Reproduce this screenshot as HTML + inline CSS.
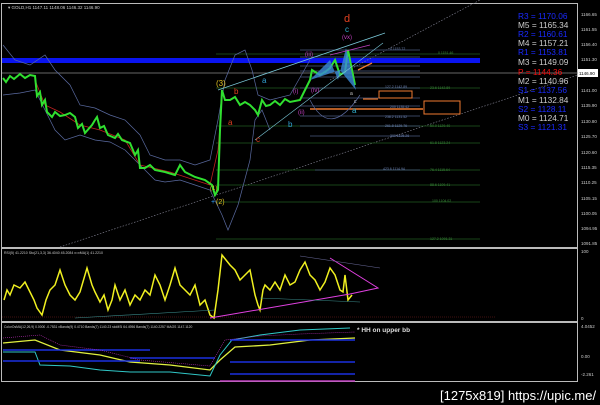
<!DOCTYPE html>
<html><head><meta charset="utf-8"><style>
html,body{margin:0;padding:0;background:#000;width:600px;height:405px;overflow:hidden}
svg{display:block}
text{font-family:"Liberation Sans",sans-serif}
</style></head><body>
<svg width="600" height="405" viewBox="0 0 600 405" xmlns="http://www.w3.org/2000/svg">
<rect width="600" height="405" fill="#000"/>
<rect x="1.5" y="3.5" width="576" height="244" fill="none" stroke="#bbb" stroke-width="1"/>
<rect x="1.5" y="248.5" width="576" height="73" fill="none" stroke="#bbb" stroke-width="1"/>
<rect x="1.5" y="322.5" width="576" height="59" fill="none" stroke="#bbb" stroke-width="1"/>
<text x="8" y="9" font-size="4.5" fill="#ccc">▾ GOLD,H1  1147.11  1148.06  1146.32  1146.90</text>
<g font-size="4.5" fill="#ccc">
<text x="581" y="16">1166.65</text><text x="581" y="31">1161.55</text><text x="581" y="46">1156.40</text>
<text x="581" y="61">1151.30</text><text x="581" y="92">1141.00</text><text x="581" y="107">1135.90</text>
<text x="581" y="123">1130.80</text><text x="581" y="138">1125.70</text><text x="581" y="154">1120.60</text>
<text x="581" y="169">1115.35</text><text x="581" y="184">1110.25</text><text x="581" y="200">1105.15</text>
<text x="581" y="215">1100.05</text><text x="581" y="230">1094.95</text><text x="581" y="245">1091.85</text>
<text x="581" y="253">100</text><text x="581" y="320">0</text><text x="581" y="328">4.0452</text>
<text x="581" y="358">0.00</text><text x="581" y="376">-2.261</text>
</g>
<rect x="2" y="58" width="478" height="5" fill="#0a14f0"/>
<line x1="2" y1="73" x2="578" y2="73" stroke="#888" stroke-width="0.8"/>
<rect x="578" y="69" width="20" height="8" fill="#fff"/><text x="579" y="75" font-size="4.5" fill="#000">1146.90</text>
<line x1="60" y1="247" x2="578" y2="75" stroke="#889" stroke-width="0.6" stroke-dasharray="1.5,1.5"/>
<line x1="330" y1="80" x2="480" y2="0" stroke="#889" stroke-width="0.6" stroke-dasharray="1.5,1.5"/>
<g stroke="#1f5a1f" stroke-width="0.7">
<line x1="216" y1="54" x2="480" y2="54"/><line x1="216" y1="88" x2="480" y2="88"/>
<line x1="216" y1="126" x2="480" y2="126"/><line x1="216" y1="143" x2="480" y2="143"/>
<line x1="216" y1="170" x2="480" y2="170"/><line x1="216" y1="185" x2="480" y2="185"/>
<line x1="216" y1="202" x2="480" y2="202"/><line x1="216" y1="239" x2="480" y2="239"/>
</g>
<g stroke="#4a5a80" stroke-width="0.7">
<line x1="300" y1="50" x2="420" y2="50"/><line x1="300" y1="57" x2="420" y2="57"/>
<line x1="300" y1="66" x2="420" y2="66"/><line x1="300" y1="71" x2="420" y2="71"/>
<line x1="300" y1="77" x2="420" y2="77"/><line x1="300" y1="88" x2="420" y2="88"/>
<line x1="300" y1="98" x2="420" y2="98"/><line x1="300" y1="106" x2="420" y2="106"/>
<line x1="300" y1="116" x2="420" y2="116"/><line x1="300" y1="126" x2="420" y2="126"/>
<line x1="310" y1="136" x2="420" y2="136"/><line x1="315" y1="170" x2="420" y2="170"/>
</g>
<g font-size="3.5" fill="#6a80b0">
<text x="390" y="50">0 1153.72</text><text x="385" y="88">127.2 1142.89</text><text x="390" y="108">200 1135.42</text>
<text x="385" y="118">238.2 1131.52</text><text x="385" y="127">261.8 1129.76</text><text x="390" y="137">300 1125.26</text><text x="383" y="170">423.6 1114.94</text>
</g>
<g font-size="3.5" fill="#3a8a3a">
<text x="438" y="54">0 1151.46</text><text x="430" y="89">23.6 1142.89</text><text x="430" y="127">50.0 1129.40</text>
<text x="430" y="144">61.8 1123.24</text><text x="430" y="171">76.4 1115.64</text><text x="430" y="186">88.6 1109.41</text><text x="432" y="202">100 1104.02</text><text x="430" y="240">127.2 1091.31</text>
</g>
<rect x="379" y="91" width="33" height="7" fill="none" stroke="#f07a30"/>
<rect x="424" y="101" width="36" height="13" fill="none" stroke="#f07a30"/>
<line x1="363" y1="99" x2="378" y2="99" stroke="#f07a30" stroke-width="1.2"/>
<line x1="310" y1="109" x2="423" y2="109" stroke="#f07a30" stroke-width="1.5"/>
<line x1="358" y1="70" x2="372" y2="63" stroke="#f07a30" stroke-width="1.3"/>
<g fill="none" stroke="#5a6aa0" stroke-width="0.7">
<path d="M3,45 L15,60 L30,65 L45,55 L55,70 L70,85 L80,105 L95,108 L110,115 L125,120 L140,135 L150,155 L165,160 L180,160 L195,165 L210,160 L218,120 L225,80 L235,55 L245,50 L252,70 L258,95 L270,100 L290,95 L310,60"/>
<path d="M3,95 L20,93 L35,90 L45,110 L55,130 L65,140 L80,135 L95,140 L110,142 L125,150 L140,165 L155,180 L165,182 L180,180 L195,185 L210,190 L222,215 L228,230 L238,205 L250,160 L255,120 L262,110 L270,130"/>
<path d="M310,100 Q330,140 360,95"/>
</g>
<path d="M35,80 L45,105 L60,112 L80,125 L100,130 L125,140 L140,165 L170,172 L210,185 L218,150 L222,100" fill="none" stroke="#c02020" stroke-width="0.8"/>
<path d="M3,78 L6,82 L10,76 L14,79 L20,74 L25,78 L30,75 L35,76 L37,96 L40,92 L42,105 L45,100 L47,112 L52,117 L55,112 L60,116 L65,115 L70,113 L75,117 L78,128 L82,124 L85,133 L92,125 L95,120 L97,117 L100,128 L104,126 L108,135 L115,138 L118,134 L122,140 L130,143 L135,155 L138,150 L140,168 L145,168 L150,165 L155,170 L165,172 L175,175 L180,165 L185,172 L195,177 L205,180 L212,185 L215,195 L218,190 L220,130 L222,90 L225,100 L230,100 L235,97 L240,105 L245,102 L250,105 L255,110 L258,115 L262,100 L266,106 L270,105 L275,101 L280,105 L285,99 L290,102 L300,100 L305,90 L310,80 L312,70 L320,75 L325,72 L330,68 L335,60 L340,75 L345,72 L348,50 L352,70 L355,85" fill="none" stroke="#30e030" stroke-width="2"/>
<path d="M310,80 L330,60 L338,80 L346,48 L356,90 L340,70 Z" fill="#3a8ad8" opacity="0.8"/>
<line x1="218" y1="90" x2="385" y2="33" stroke="#7ac8d8" stroke-width="0.8"/>
<line x1="255" y1="140" x2="383" y2="43" stroke="#7ac8d8" stroke-width="0.6"/>
<line x1="330" y1="55" x2="370" y2="45" stroke="#c040c0" stroke-width="0.8"/>
<g font-size="8">
<text x="216" y="86" fill="#e0c020">(3)</text><text x="210" y="190" fill="#e0c020" font-size="6">(1)</text>
<text x="216" y="204" fill="#e0c020" font-size="7">(2)</text><text x="211" y="204" fill="#30a0ff" font-size="7">+</text>
<text x="234" y="94" fill="#e04020">b</text><text x="228" y="125" fill="#e04020">a</text><text x="256" y="142" fill="#e04020">c</text>
<text x="262" y="83" fill="#30a0d0">a</text><text x="288" y="127" fill="#30a0d0">b</text>
<text x="344" y="22" fill="#e04020" font-size="11">d</text><text x="345" y="32" fill="#30b0d0">c</text>
<text x="342" y="39" fill="#c040c0" font-size="6">(vx)</text><text x="305" y="56" fill="#c040c0" font-size="6">(iii)</text>
<text x="293" y="93" fill="#c040c0" font-size="6">(i)</text><text x="311" y="92" fill="#c040c0" font-size="6">(iv)</text>
<text x="298" y="114" fill="#c040c0" font-size="6">(ii)</text><text x="352" y="113" fill="#30b0d0">a</text>
<text x="350" y="95" fill="#ccc" font-size="5">a</text><text x="354" y="103" fill="#ccc" font-size="5">c</text>
</g>
<g font-size="8.3">
<text x="518" y="19" fill="#1a2aff">R3 = 1170.06</text>
<text x="518" y="28" fill="#ccc">M5 = 1165.34</text>
<text x="518" y="37" fill="#1a2aff">R2 = 1160.61</text>
<text x="518" y="46" fill="#ccc">M4 = 1157.21</text>
<text x="518" y="55" fill="#1a2aff">R1 = 1153.81</text>
<text x="518" y="65" fill="#ccc">M3 = 1149.09</text>
<text x="518" y="75" fill="#f01010">P  = 1144.36</text>
<text x="518" y="84" fill="#ccc">M2 = 1140.96</text>
<text x="518" y="93" fill="#1a2aff">S1 = 1137.56</text>
<text x="518" y="103" fill="#ccc">M1 = 1132.84</text>
<text x="518" y="112" fill="#1a2aff">S2 = 1128.11</text>
<text x="518" y="121" fill="#ccc">M0 = 1124.71</text>
<text x="518" y="130" fill="#1a2aff">S3 = 1121.31</text>
</g>
<text x="4" y="254" font-size="3.5" fill="#ccc">RSI(5) 41.2210  Sto(21,3,3) 36.4040 45.2084  x=xMA(1) 41.2210</text>
<line x1="2" y1="317" x2="495" y2="317" stroke="#802020" stroke-width="0.5" stroke-dasharray="1,1"/>
<path d="M4,300 L7,290 L10,295 L14,285 L20,288 L25,282 L30,292 L34,300 L37,308 L42,315 L46,300 L50,290 L55,285 L60,270 L65,285 L70,295 L75,300 L80,292 L87,268 L92,285 L95,292 L100,302 L104,295 L108,310 L112,300 L115,285 L120,300 L125,290 L130,305 L135,295 L140,300 L145,290 L150,295 L155,275 L160,285 L165,300 L170,285 L175,268 L180,285 L185,290 L190,295 L195,285 L200,305 L205,300 L210,315 L214,318 L218,290 L222,255 L226,260 L230,265 L235,270 L240,280 L245,275 L250,270 L253,285 L255,295 L258,305 L260,310 L263,290 L265,285 L270,290 L275,282 L280,290 L285,275 L290,285 L295,282 L300,270 L305,262 L310,275 L315,280 L320,290 L325,282 L330,268 L335,275 L340,290 L343,292 L345,275 L348,300 L352,295" fill="none" stroke="#f0f020" stroke-width="1.5"/>
<path d="M210,318 L350,294 L378,288 L330,258" fill="none" stroke="#e040e0" stroke-width="1"/>
<line x1="75" y1="318" x2="215" y2="310" stroke="#3a8a8a" stroke-width="0.6"/>
<line x1="300" y1="256" x2="380" y2="268" stroke="#6a6a9a" stroke-width="0.6"/>
<line x1="260" y1="298" x2="360" y2="302" stroke="#3a8a8a" stroke-width="0.6"/>
<text x="4" y="328" font-size="3.3" fill="#ccc">ColorOsMA(12,26,9) 0.0000 -0.7531  xBands(9) 0.4710  Bands(7) 1140.23  stoMSI 64.4956  Bands(7) 1140.2257  MAOS 1147.1120</text>
<text x="357" y="332" font-size="6.5" fill="#ddd" font-weight="bold">* HH on upper bb</text>
<g fill="none" stroke-width="1.3">
<path d="M3,343 L35,340 L60,350 L100,355 L130,362 L170,365 L210,370 L220,360 L235,347 L270,345 L310,340 L355,338" stroke="#e0f040"/>
<path d="M3,352 L35,352 L40,365 L70,366 L100,370 L130,372 L170,372 L210,376 L220,355 L232,340 L260,335 L300,330 L350,328" stroke="#30c8c8" stroke-width="1"/>
<path d="M3,350 L150,350 M3,361 L140,361 M130,358 L215,358 M230,340 L355,340 M230,362 L355,362 M230,374 L355,374" stroke="#1a30e0" stroke-width="1.5"/>
<path d="M3,338 L40,335 L60,345 L100,350 L140,360 L210,366 L225,340 L260,336 L300,334 L355,332" stroke="#c030c0" stroke-width="0.6" stroke-dasharray="1,1"/>
</g>
<path d="M220,381 L355,381" stroke="#c040c0" stroke-width="1.5"/>
<text x="440" y="400" font-size="13" fill="#fff">[1275x819] https://upic.me/</text>
</svg>
</body></html>
